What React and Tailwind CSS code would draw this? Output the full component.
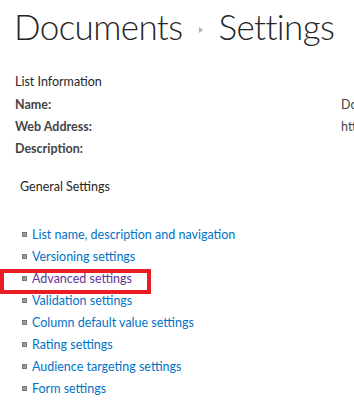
import React from 'react';

const LINKS = [
  { label: 'List name, description and navigation' },
  { label: 'Versioning settings' },
  { label: 'Advanced settings', visited: true, marked: true },
  { label: 'Validation settings' },
  { label: 'Column default value settings' },
  { label: 'Rating settings' },
  { label: 'Audience targeting settings' },
  { label: 'Form settings' },
];

const FONT = { fontFamily: 'Lato, "Noto Sans", sans-serif' };

export default function App() {
  return (
    <div className="w-[354px] h-[404px] overflow-hidden bg-white text-[#444]" style={FONT}>
      {/* title */}
      <div className="flex items-center whitespace-nowrap pl-[14px] pt-[1px] h-[52px] text-[35px] font-light text-[#262626] leading-none tracking-[-0.6px]">
        <span>Documents</span>
        <svg width="8" height="8" viewBox="0 0 8 8" className="mx-[14px] mt-[6px]">
          <path d="M2 1 L6 4 L2 7 Z" fill="#b1b1b1" />
        </svg>
        <span>Settings</span>
      </div>

      {/* list information */}
      <div className="pl-[15px] pt-[19px] text-[12.5px] leading-[22px]">
        <div className="text-[#262626] mb-[1px]">List Information</div>
        <div className="grid grid-cols-[326px_1fr] whitespace-nowrap text-[#444]">
          <div className="font-bold">Name:</div>
          <div>Documents</div>
          <div className="font-bold">Web Address:</div>
          <div>http://</div>
          <div className="font-bold">Description:</div>
          <div></div>
        </div>
      </div>

      {/* general settings */}
      <div className="pl-[20px] pt-[18px] text-[12.5px] text-[#262626]">General Settings</div>

      <ul className="pt-[27px] text-[12.5px] leading-[22px]">
        {LINKS.map((l) => (
          <li key={l.label} className="relative flex items-center pl-[22px]">
            {l.marked && (
              <span className="absolute left-0 top-[1px] w-[151px] h-[25px] border-[4px] border-[#ec1c24]" />
            )}
            <span className="w-[5px] h-[5px] bg-[#9a9a9a] border border-[#7a7a7a] mr-[5px]" />
            <span className={l.visited ? 'text-[#663399]' : 'text-[#0072c6]'}>{l.label}</span>
          </li>
        ))}
      </ul>
    </div>
  );
}
